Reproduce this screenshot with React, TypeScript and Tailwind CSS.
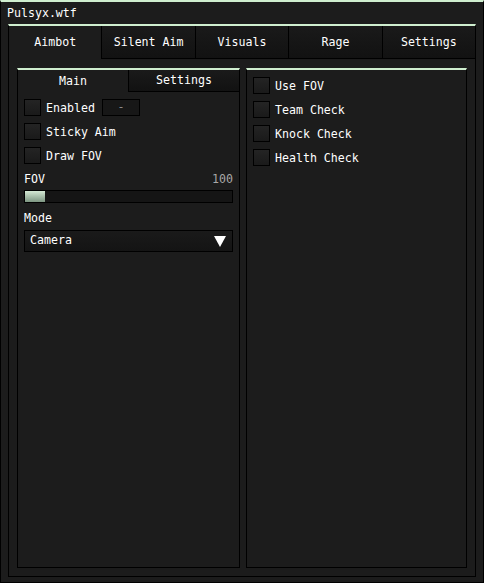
import React, { useState } from 'react';

const font = { fontFamily: '"DejaVu Sans Mono", "Liberation Mono", monospace' };

const Checkbox: React.FC<{ label: string; children?: React.ReactNode }> = ({ label, children }) => {
  const [on, setOn] = useState(false);
  return (
    <div className="flex items-center h-[17px]">
      <button
        onClick={() => setOn(!on)}
        className={`w-[17px] h-[17px] border border-black ${on ? 'bg-[#cfeecf]' : 'bg-gradient-to-b from-[#242424] to-[#1a1a1a]'}`}
      />
      <span className="ml-[5px] pt-[2px] text-white">{label}</span>
      {children}
    </div>
  );
};

export default function App() {
  const [tab, setTab] = useState('Aimbot');
  const [sub, setSub] = useState('Main');
  const tabs = ['Aimbot', 'Silent Aim', 'Visuals', 'Rage', 'Settings'];

  return (
    <div
      style={font}
      className="w-[484px] h-[583px] bg-[#1c1c1c] border border-black border-t-2 border-t-[#cfeecf] flex flex-col text-[11.6px] leading-none text-white"
    >
      <div className="h-[22px] flex items-center pl-[6px] pt-[1px]">Pulsyx.wtf</div>
      <div className="mx-[7px] flex-1 mb-[5px] border border-black border-t-2 border-t-[#cfeecf] flex flex-col">
        <div className="flex h-[33px]">
          {tabs.map((t, i) => (
            <button
              key={t}
              onClick={() => setTab(t)}
              className={`flex-1 flex items-center justify-center pt-[1px] ${i > 0 ? 'border-l border-black' : ''} ${
                tab === t ? 'bg-[#1c1c1c]' : 'bg-gradient-to-b from-[#1a1a1a] to-[#121212] border-b border-b-black'
              }`}
            >
              {t}
            </button>
          ))}
        </div>
        <div className="flex-1 flex gap-[6px] px-[8px] pt-[9px] pb-[8px]">
          <div className="w-[223px] border border-black border-t-2 border-t-[#cfeecf] flex flex-col">
            <div className="flex h-[22px]">
              {['Main', 'Settings'].map((s, i) => (
                <button
                  key={s}
                  onClick={() => setSub(s)}
                  className={`flex-1 flex items-center justify-center pt-[1px] ${i > 0 ? 'border-l border-black' : ''} ${
                    sub === s ? 'bg-[#1c1c1c]' : 'bg-gradient-to-b from-[#1a1a1a] to-[#121212] border-b border-b-black'
                  }`}
                >
                  {s}
                </button>
              ))}
            </div>
            <div className="px-[6px] pt-[7px] flex flex-col">
              <div className="flex flex-col gap-[7px]">
                <Checkbox label="Enabled">
                  <div className="ml-[7px] w-[38px] h-[17px] border border-black bg-[#171717] flex items-center justify-center text-[#8a8a8a]">
                    -
                  </div>
                </Checkbox>
                <Checkbox label="Sticky Aim" />
                <Checkbox label="Draw FOV" />
              </div>
              <div className="flex justify-between mt-[10px] h-[12px] items-center">
                <span>FOV</span>
                <span className="text-[#a8a8a8]">100</span>
              </div>
              <div className="mt-[4px] h-[13px] border border-black bg-[#151515]">
                <div className="w-[20px] h-full bg-gradient-to-b from-[#d4e8d4] to-[#7d9682]" />
              </div>
              <div className="mt-[10px] h-[12px] flex items-center">Mode</div>
              <div className="mt-[5px] h-[22px] border border-black bg-gradient-to-b from-[#1a1a1a] to-[#141414] flex items-center justify-between pl-[5px] pr-[6px]">
                <span>Camera</span>
                <svg width="12" height="11" viewBox="0 0 12 11">
                  <polygon points="0,0 12,0 6,11" fill="#ffffff" />
                </svg>
              </div>
            </div>
          </div>
          <div className="flex-1 border border-black border-t-2 border-t-[#cfeecf] px-[6px] pt-[7px] flex flex-col gap-[7px]">
            <Checkbox label="Use FOV" />
            <Checkbox label="Team Check" />
            <Checkbox label="Knock Check" />
            <Checkbox label="Health Check" />
          </div>
        </div>
      </div>
    </div>
  );
}
